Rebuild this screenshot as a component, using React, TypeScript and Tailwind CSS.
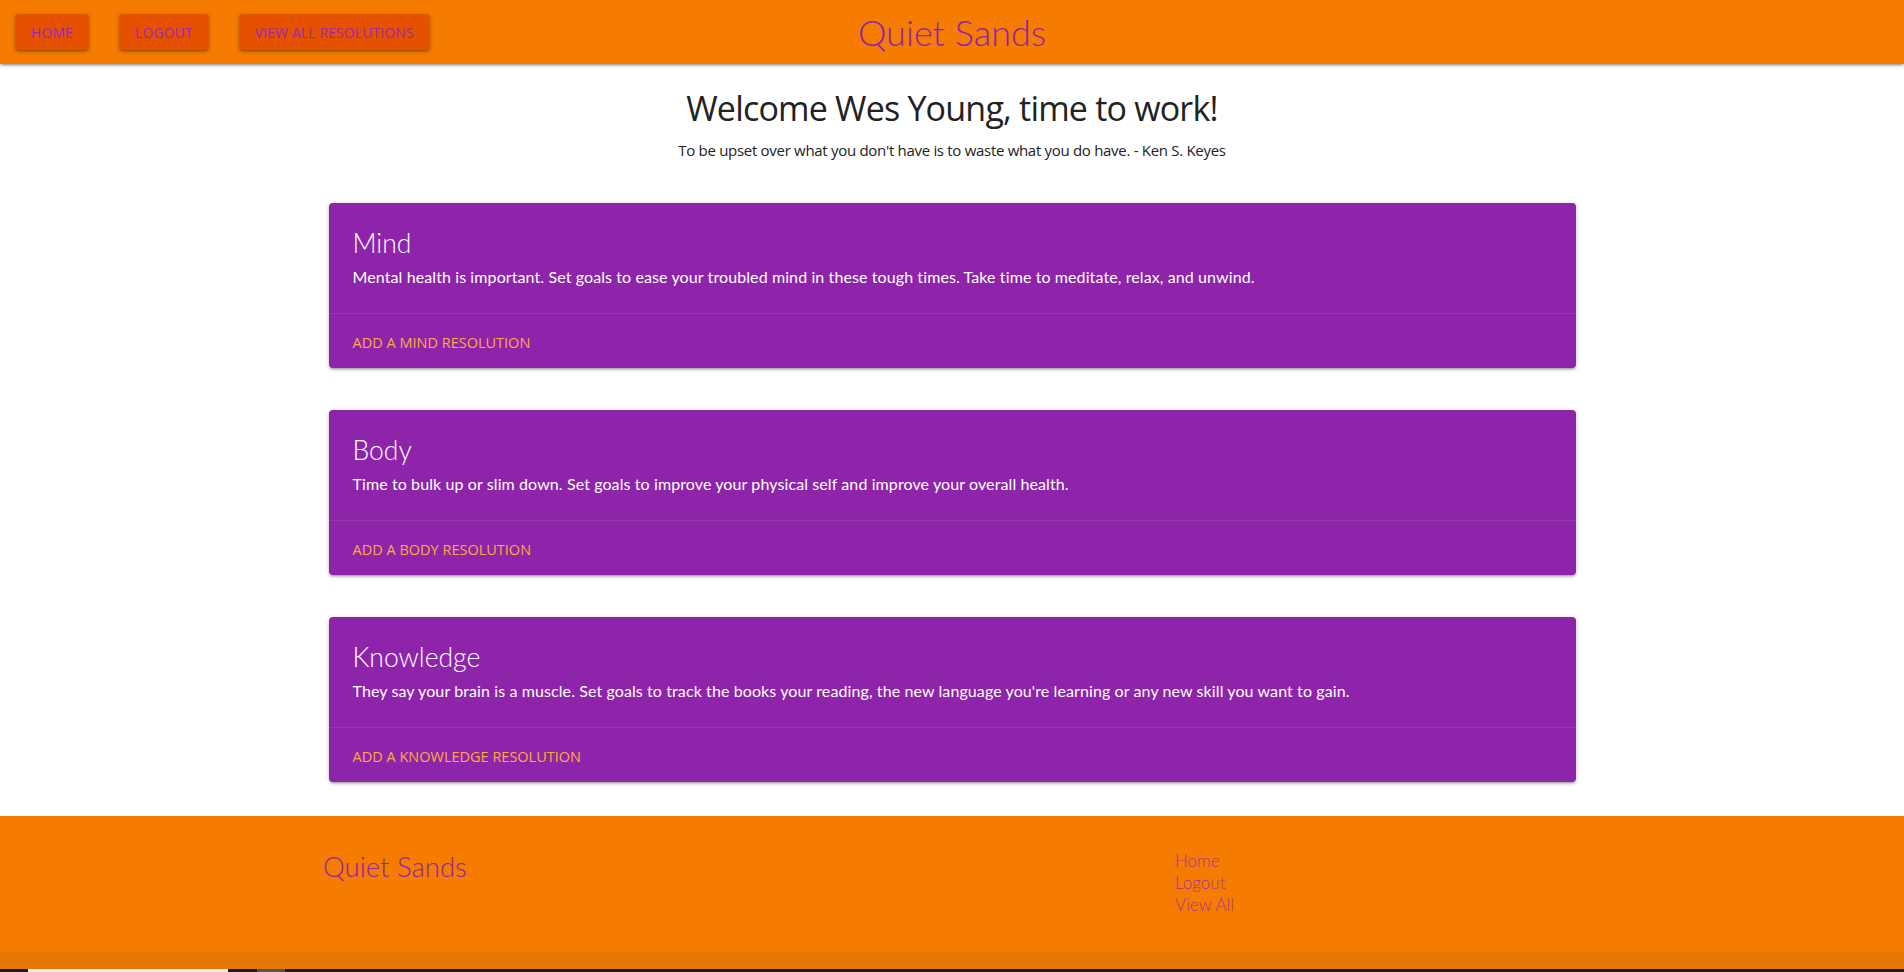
import React from 'react';

const cards = [
  {
    title: 'Mind',
    text: 'Mental health is important. Set goals to ease your troubled mind in these tough times. Take time to meditate, relax, and unwind.',
    action: 'Add a mind resolution',
  },
  {
    title: 'Body',
    text: 'Time to bulk up or slim down. Set goals to improve your physical self and improve your overall health.',
    action: 'Add a body resolution',
  },
  {
    title: 'Knowledge',
    text: "They say your brain is a muscle. Set goals to track the books your reading, the new language you're learning or any new skill you want to gain.",
    action: 'Add a knowledge resolution',
  },
];

const NavButton: React.FC<{ label: string }> = ({ label }) => (
  <button className="h-9 px-4 rounded-sm bg-[#e65100] text-[#9c27b0] text-[14px] uppercase tracking-[0.1px] shadow-[0_2px_2px_0_rgba(0,0,0,0.14),0_3px_1px_-2px_rgba(0,0,0,0.12),0_1px_5px_0_rgba(0,0,0,0.2)]">
    {label}
  </button>
);

export default function App() {
  return (
    <div className="h-[972px] overflow-hidden bg-white flex flex-col font-['Open_Sans',sans-serif] text-[#222]">
      <nav className="relative z-10 h-16 shrink-0 bg-[#f57c00] flex items-center shadow-[0_2px_2px_0_rgba(0,0,0,0.14),0_3px_1px_-2px_rgba(0,0,0,0.12),0_1px_5px_0_rgba(0,0,0,0.2)]">
        <div className="flex items-center gap-[30px] pl-[15px]">
          <NavButton label="Home" />
          <NavButton label="Logout" />
          <NavButton label="View all resolutions" />
        </div>
        <div className="absolute left-1/2 -translate-x-1/2 top-0 h-16 flex items-center font-['Lato',sans-serif] font-light text-[36px] text-[#8e24aa]">
          Quiet Sands
        </div>
      </nav>

      <main className="flex flex-col items-center">
        <h1 className="mt-[22px] text-[34px] leading-[44px] tracking-[-0.8px] text-[#222]">Welcome Wes Young, time to work!</h1>
        <p className="mt-[9px] text-[15px] leading-[22px] tracking-[-0.3px] text-[#222]">
          To be upset over what you don't have is to waste what you do have. - Ken S. Keyes
        </p>

        <div className="w-[1247px] mt-[42px] flex flex-col gap-[42px]">
          {cards.map(c => (
            <div
              key={c.title}
              className="bg-[#8e24aa] rounded-sm shadow-[0_2px_2px_0_rgba(0,0,0,0.14),0_3px_1px_-2px_rgba(0,0,0,0.12),0_1px_5px_0_rgba(0,0,0,0.2)]"
            >
              <div className="px-6 pt-6 pb-[25px] text-white font-['Lato',sans-serif]">
                <div className="text-[26.5px] leading-[32px] font-light">{c.title}</div>
                <p className="mt-[7px] text-[16px] leading-[22px] tracking-[0.1px]">{c.text}</p>
              </div>
              <div className="border-t border-[rgba(160,160,160,0.2)] px-6 py-[16px] h-[55px]">
                <span className="text-[#ffab40] text-[14.5px] leading-[22px] uppercase">{c.action}</span>
              </div>
            </div>
          ))}
        </div>
      </main>

      <footer className="mt-[34px] bg-[#f57c00] flex flex-col flex-1">
        <div className="h-[136px] flex shrink-0">
          <div className="pl-[323px] pt-[35px] w-[1175px] font-['Lato',sans-serif] font-light text-[27.5px] leading-[32px] text-[#8e24aa]">
            Quiet Sands
          </div>
          <ul className="pt-[34px] flex flex-col font-['Lato',sans-serif] font-light text-[17px] leading-[22px] text-[#b0308e]">
            <li>Home</li>
            <li>Logout</li>
            <li>View All</li>
          </ul>
        </div>
        <div className="flex-1 bg-[rgba(51,51,51,0.08)]"></div>
        <div className="h-[3px] shrink-0 bg-[#1a1a1a] flex">
          <div className="ml-[28px] w-[200px] bg-[#f0ede6]"></div>
          <div className="ml-[29px] w-[28px] bg-[#555]"></div>
        </div>
      </footer>
    </div>
  );
}
